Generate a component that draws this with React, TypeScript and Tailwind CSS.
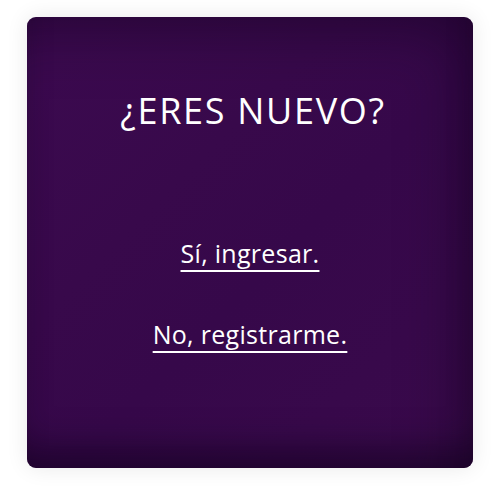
export default function App() {
  return (
    <div className="min-h-screen bg-white pl-[27px] pt-[17px]">
      <div
        className="
          relative
          flex
          h-[451px]
          w-[446px]
          flex-col
          items-center
          overflow-hidden
          rounded-[9px]
          bg-[linear-gradient(135deg,#3c0a50_0%,#38094b_35%,#36084a_55%,#3a0a4c_100%)]
          shadow-[0_0_22px_rgba(0,0,0,0.09),inset_0_-34px_34px_-14px_rgba(15,0,25,0.55),inset_-30px_30px_60px_-20px_rgba(15,0,25,0.5)]
        "
        style={{ fontFamily: "'Open Sans', sans-serif" }}
      >
        {/* Title */}

        <h1 className="mt-[72px] pl-[6px] text-[36px] font-normal leading-[44px] tracking-[1.7px] text-white">
          ¿ERES NUEVO?
        </h1>

        {/* Options */}

        <a
          href="#"
          className="mt-[104px] text-[25px] font-normal leading-[32px] tracking-[0.3px] text-white underline decoration-[1.5px] underline-offset-[7px]"
        >
          Sí, ingresar.
        </a>

        <a
          href="#"
          className="mt-[49px] text-[25px] font-normal leading-[32px] tracking-[0.3px] text-white underline decoration-[1.5px] underline-offset-[7px]"
        >
          No, registrarme.
        </a>
      </div>
    </div>
  );
}
